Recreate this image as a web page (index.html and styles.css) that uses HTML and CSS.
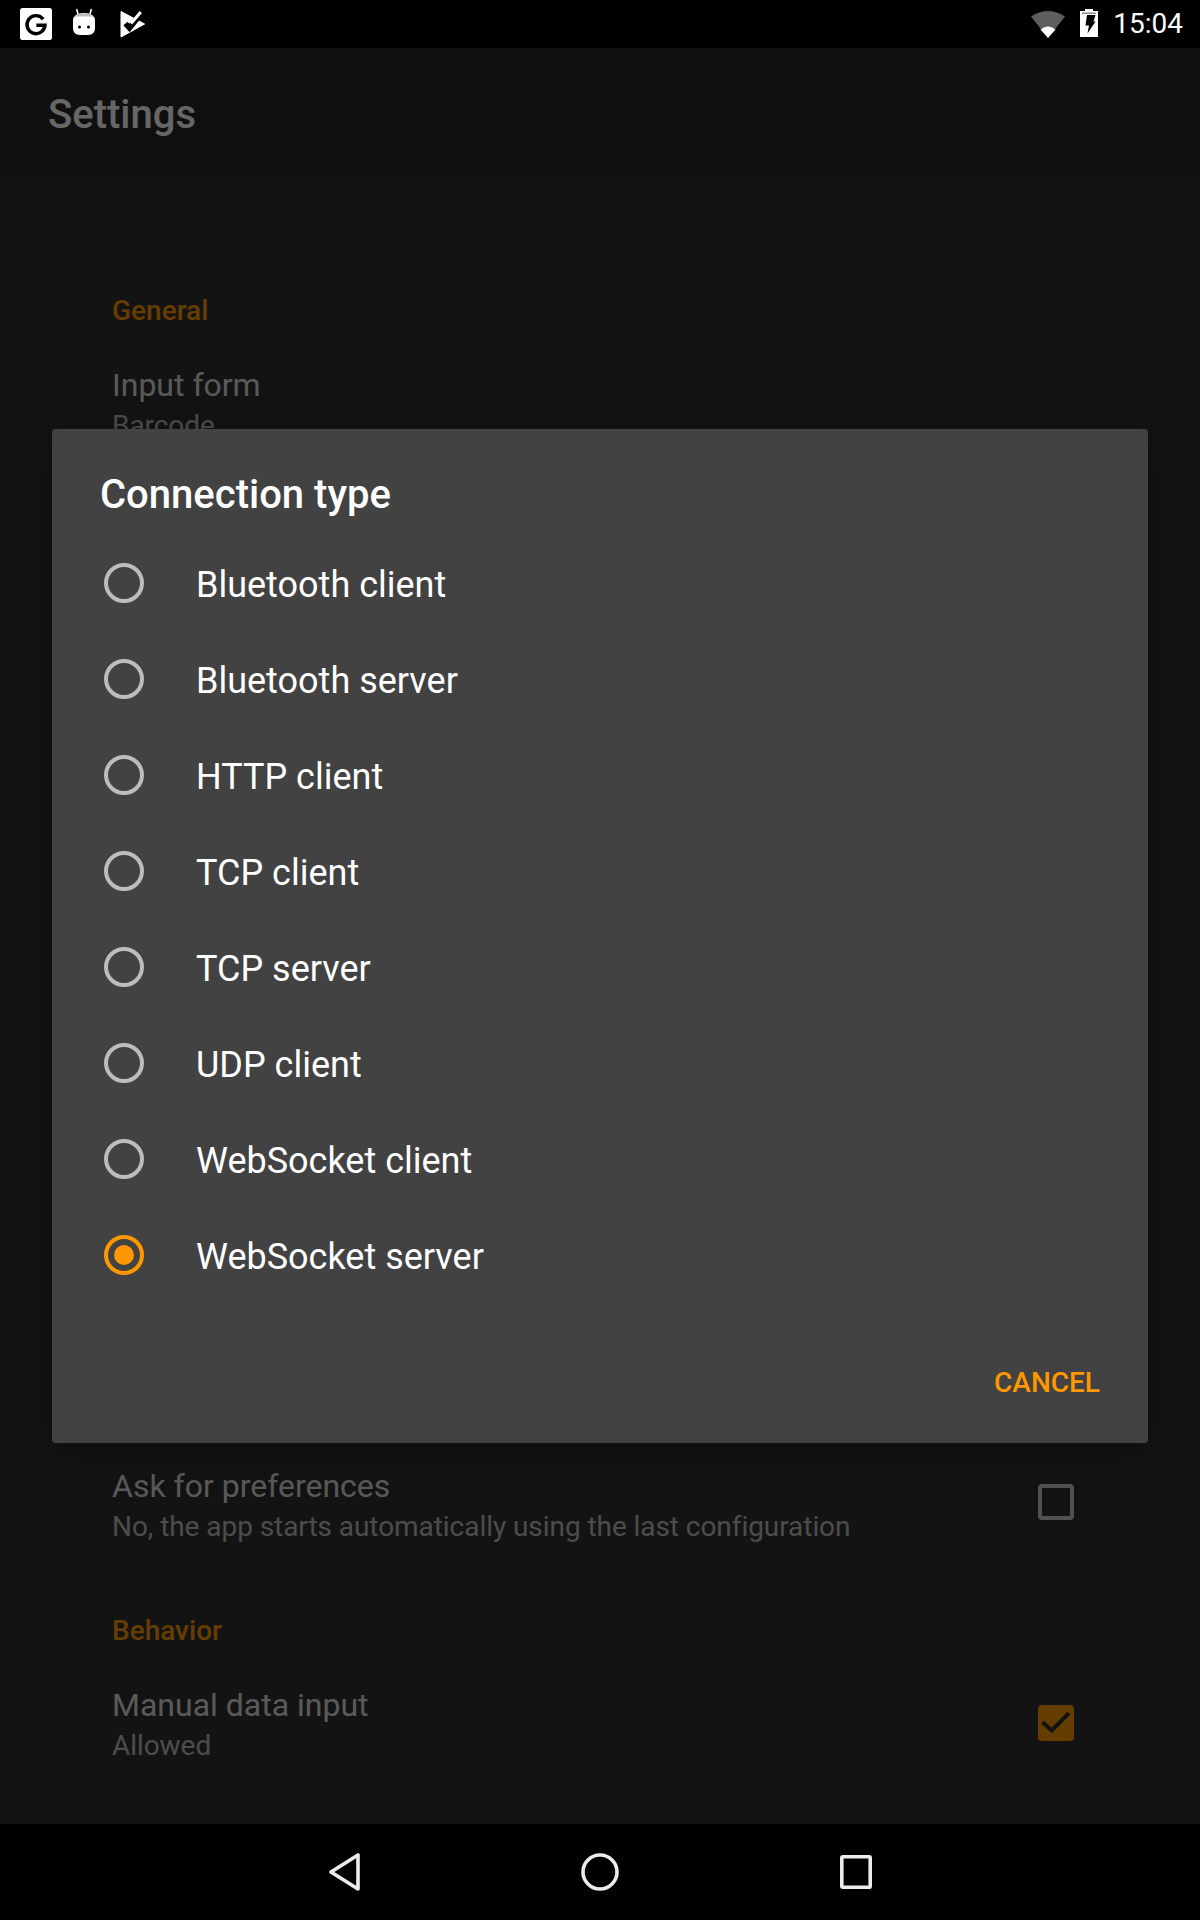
FILE: index.html
```html
<!DOCTYPE html>
<html lang="en">
<head>
<meta charset="utf-8">
<title>Settings</title>
<link rel="stylesheet" href="styles.css">
</head>
<body>
<div class="screen">
  <header class="status">
    <div class="status-left">
      <svg class="ico-g" viewBox="0 0 32 32"><rect width="32" height="32" rx="2.5" fill="#fff"/><path d="M23.2 11.2A9 9 0 1 0 25 17.2H16.4" fill="none" stroke="#000" stroke-width="3.4"/></svg>
      <svg class="ico-bot" viewBox="0 0 24 28"><path d="M6 6 4.600 1M18 6l1.400-5" stroke="#fff" stroke-width="1.600" fill="none"/><path d="M1 13Q1 5 12 5T23 13V20Q23 27 16 27H8Q1 27 1 20Z" fill="#fff"/><path d="M3 8.500Q5 5.500 12 5.500T21 8.500Z" fill="#bdbdbd"/><circle cx="7.500" cy="19" r="1.500" fill="#000"/><circle cx="16.500" cy="19" r="1.500" fill="#000"/></svg>
      <svg class="ico-play" viewBox="0 0 26 28"><path d="M1 1.500 24.600 14 1 27Z" fill="#fff" stroke="#fff" stroke-linejoin="round"/><path d="M5.500 13.500 9.500 18 21.500 3" fill="none" stroke="#000" stroke-width="5.500"/><path d="M5.800 14 9.300 18 12.500 14.500" fill="none" stroke="#000" stroke-width="2.400"/><path d="M11 13.500 20.800 2" stroke="#fff" stroke-width="3" fill="none"/></svg>
    </div>
    <div class="status-right">
      <svg class="ico-wifi" viewBox="0 0 34 27"><path d="M0 5.500Q17-5.500 34 5.500L17 27Z" fill="#5e5e5e"/><path d="M9.500 18.500Q17 12.500 24.500 18.500L17 27Z" fill="#fff"/></svg>
      <svg class="ico-batt" viewBox="0 0 18 28"><path d="M5 0H13V2H18V28H0V2H5Z" fill="#fff"/><rect x="2" y="3.500" width="14" height="1.500" fill="#8c8c8c"/><path d="M7 6H15.500L13.500 12.500H15.500L7.500 24.500 9 16.500H5.500Z" fill="#000"/></svg>
      <span class="time">15:04</span>
    </div>
  </header>

  <main class="app">
    <div class="toolbar">Settings</div>
    <div class="settings">
      <h2 class="section first">General</h2>
      <div class="pref">
        <div class="pref-text">
          <div class="pref-title">Input form</div>
          <div class="pref-sub">Barcode</div>
        </div>
      </div>
      <div class="covered"></div>
      <div class="pref">
        <div class="pref-text">
          <div class="pref-title">Ask for preferences</div>
          <div class="pref-sub">No, the app starts automatically using the last configuration</div>
        </div>
        <span class="check"></span>
      </div>
      <h2 class="section">Behavior</h2>
      <div class="pref">
        <div class="pref-text">
          <div class="pref-title">Manual data input</div>
          <div class="pref-sub">Allowed</div>
        </div>
        <span class="check on">
          <svg viewBox="0 0 36 36"><path d="M4.500 17 13.700 25.500 31 8" fill="none" stroke="#303030" stroke-width="4"/></svg>
        </span>
      </div>
    </div>
    <div class="scrim"></div>
    <section class="dialog">
      <h1 class="dialog-title">Connection type</h1>
      <ul class="options">
        <li class="option"><span class="radio"></span>Bluetooth client</li>
        <li class="option"><span class="radio"></span>Bluetooth server</li>
        <li class="option"><span class="radio"></span>HTTP client</li>
        <li class="option"><span class="radio"></span>TCP client</li>
        <li class="option"><span class="radio"></span>TCP server</li>
        <li class="option"><span class="radio"></span>UDP client</li>
        <li class="option"><span class="radio"></span>WebSocket client</li>
        <li class="option"><span class="radio on"></span>WebSocket server</li>
      </ul>
      <div class="actions"><span class="cancel">CANCEL</span></div>
    </section>
  </main>

  <nav class="navbar">
    <svg class="nav-back" viewBox="0 0 31 38"><path d="M29 2V36L2 19Z" fill="none" stroke="#ececec" stroke-width="3.600" stroke-linejoin="round"/></svg>
    <svg class="nav-home" viewBox="0 0 38 38"><circle cx="19" cy="19" r="17" fill="none" stroke="#ececec" stroke-width="3.600"/></svg>
    <svg class="nav-recent" viewBox="0 0 32 34"><rect x="1.800" y="1.800" width="28.400" height="30.400" rx="1" fill="none" stroke="#ececec" stroke-width="3.600"/></svg>
  </nav>
</div>
</body>
</html>
```

FILE: styles.css
```css
* { box-sizing: border-box; }
html, body { margin: 0; padding: 0; background: #000; }
body { font-family: Roboto, "Liberation Sans", sans-serif; color: #fff; }

.screen { width: 1200px; height: 1920px; display: flex; flex-direction: column; overflow: hidden; }

.status { height: 48px; flex: none; background: #000; display: flex; justify-content: space-between; align-items: center; padding: 0 17px 0 20px; }
.status-left { display: flex; align-items: center; }
.status-right { display: flex; align-items: center; }
.ico-g { width: 32px; height: 32px; display: block; }
.ico-bot { width: 24px; height: 28px; display: block; margin-left: 20px; margin-top: -4px; }
.ico-play { width: 26px; height: 28px; display: block; margin-left: 24px; }
.ico-wifi { width: 34px; height: 27px; display: block; }
.ico-batt { width: 18px; height: 28px; display: block; margin-left: 15px; margin-top: -2px; }
.time { font-size: 28px; margin-left: 15px; line-height: 48px; }

.app { flex: 1; position: relative; overflow: hidden; background: #303030; }
.toolbar { height: 128px; background: #272727; padding-left: 48px; font-size: 40px; font-weight: 500; line-height: 134px; color: #fff; }

.settings { padding: 0 126px 0 112px; }
.section { margin: 0; font-size: 28px; font-weight: 500; line-height: 40px; color: #ff9800; padding-top: 65px; }
.section.first { padding-top: 115px; }
.pref { display: flex; align-items: center; justify-content: space-between; padding-top: 32px; }
.pref-title { font-size: 32px; line-height: 44px; color: rgba(255,255,255,.87); }
.pref-sub { font-size: 28px; line-height: 38px; color: rgba(255,255,255,.7); letter-spacing: -.06px; }
.covered { height: 987px; }
.check { width: 36px; height: 36px; flex: none; border: 4px solid rgba(255,255,255,.75); border-radius: 4px; margin-top: -6px; }
.check.on { background: #ff9800; border: 0; margin-top: -3px; }
.check svg { width: 36px; height: 36px; display: block; }

.scrim { position: absolute; inset: 0; background: rgba(0,0,0,.6); }

.dialog { position: absolute; left: 52px; top: 381px; width: 1096px; height: 1014px; background: #424242; border-radius: 4px; box-shadow: 0 10px 40px rgba(0,0,0,.3); }
.dialog-title { margin: 0; padding: 31px 48px 0; font-size: 40px; line-height: 70px; height: 106px; font-weight: 500; color: #fff; }
.options { list-style: none; margin: 0; padding: 0; }
.option { height: 96px; display: flex; align-items: center; padding: 4px 0 0 52px; font-size: 36px; color: #fff; }
.radio { width: 40px; height: 40px; flex: none; border: 4px solid #bdbdbd; border-radius: 50%; margin: 0 52px 4px 0; display: flex; align-items: center; justify-content: center; }
.radio.on { border-color: #ff9800; }
.radio.on::after { content: ""; width: 20px; height: 20px; border-radius: 50%; background: #ff9800; }
.actions { display: flex; justify-content: flex-end; padding: 45px 48px 0; }
.cancel { font-size: 28px; font-weight: 500; line-height: 70px; color: #ff9800; }

.navbar { height: 96px; flex: none; background: #000; position: relative; }
.navbar svg { position: absolute; display: block; }
.nav-back { left: 329px; top: 29px; width: 31px; height: 38px; }
.nav-home { left: 581px; top: 29px; width: 38px; height: 38px; }
.nav-recent { left: 840px; top: 31px; width: 32px; height: 34px; }
```
